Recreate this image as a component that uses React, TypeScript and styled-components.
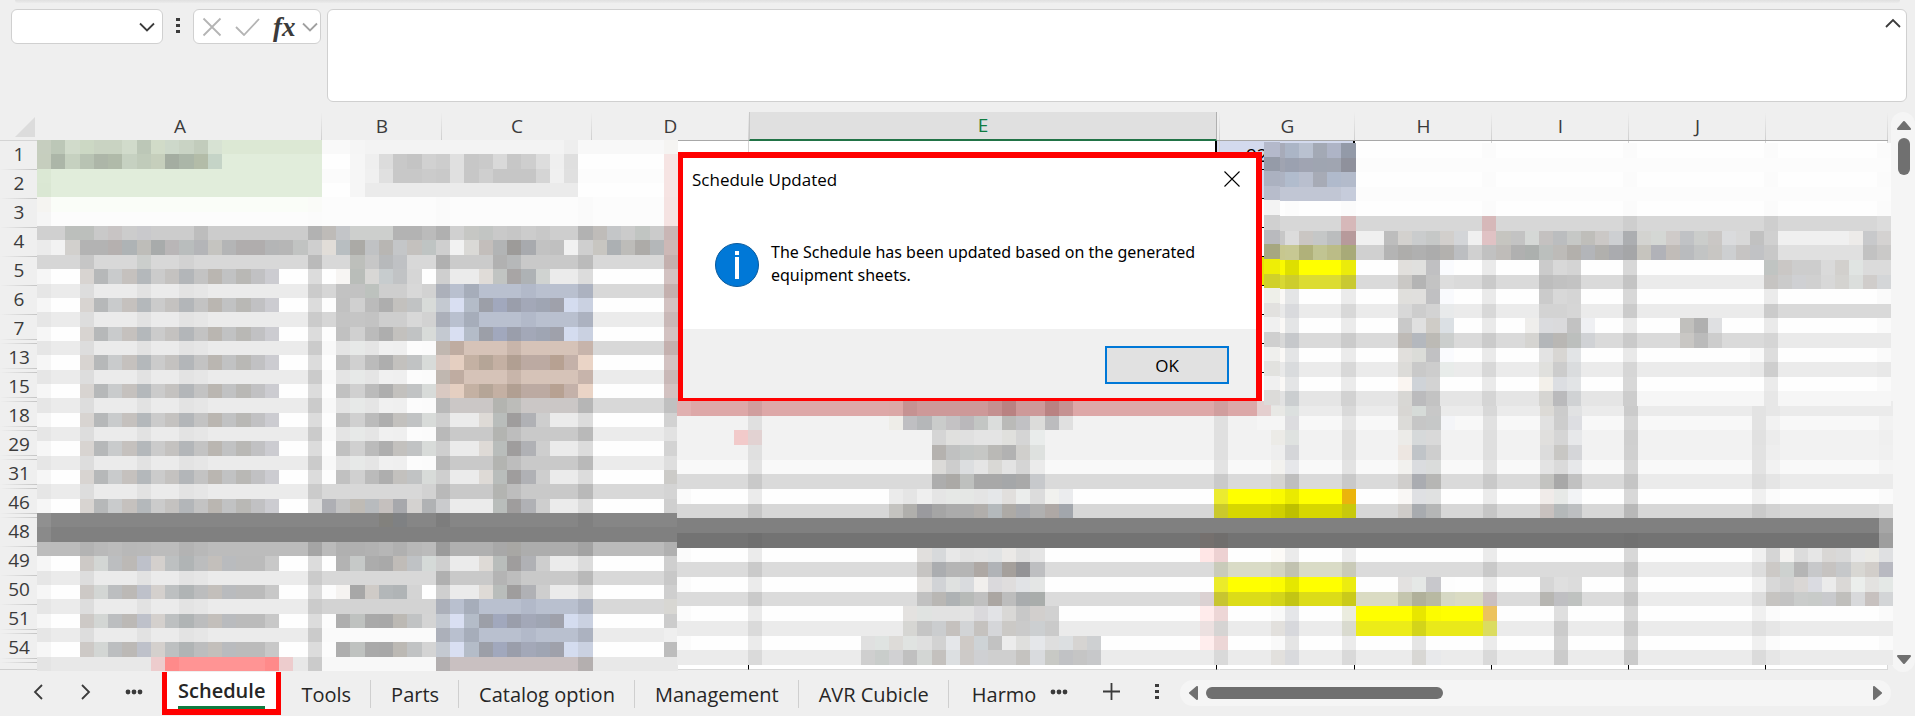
import React from "react";
import styled, { createGlobalStyle, css } from "styled-components";

const GlobalStyle = createGlobalStyle`
  *, *::before, *::after { box-sizing: border-box; }
  body {
    margin: 0;
    background: #efefef;
    color: #3b3b3b;
    font-family: "Open Sans", "Noto Sans", sans-serif;
  }
  button, input, textarea { font: inherit; color: inherit; }
`;

/* ---------- layout ---------- */

const Page = styled.div`
  position: relative;
  display: flex;
  flex-direction: column;
  min-height: 100vh;
  overflow: hidden;
`;

const RibbonEdge = styled.div`
  height: 3px;
  margin: 0 15px;
  border-radius: 0 0 6px 6px;
  background: linear-gradient(#e0e0e0, #ebebeb);
`;

const FormulaBar = styled.header`
  display: flex;
  align-items: flex-start;
  height: 109px;
  padding: 6px 8px 0 11px;
`;

const Box = styled.div`
  display: flex;
  align-items: center;
  height: 35px;
  background: #fff;
  border: 1px solid #d0d0d0;
  border-radius: 6px;
`;

const NameBox = styled(Box)`
  width: 152px;
  padding-right: 7px;
`;

const FunctionBox = styled(Box)`
  width: 128px;
  gap: 13px;
  padding-left: 8px;
`;

const FxGroup = styled.div`
  display: flex;
  align-items: center;
  gap: 6px;
`;

const NameInput = styled.input`
  flex: 1;
  min-width: 0;
  border: 0;
  outline: 0;
  background: transparent;
  font-size: 18px;
`;

const IconButton = styled.button`
  display: flex;
  align-items: center;
  justify-content: center;
  padding: 0;
  border: 0;
  background: transparent;
  color: #3b3b3b;
`;

const DotsGap = styled.div`
  display: flex;
  justify-content: center;
  width: 30px;
  padding-top: 9px;
`;

const FxLabel = styled.span`
  font: italic bold 27px/30px "Liberation Serif", serif;
`;

const FormulaField = styled.div`
  display: flex;
  flex: 1;
  align-items: flex-start;
  height: 93px;
  margin-left: 6px;
  padding: 8px 5px 0 8px;
  background: #fff;
  border: 1px solid #d0d0d0;
  border-radius: 6px;
`;

const FormulaText = styled.textarea`
  flex: 1;
  height: 76px;
  padding: 0;
  border: 0;
  outline: 0;
  resize: none;
  background: transparent;
  font-size: 18px;
`;

/* ---------- sheet ---------- */

const Sheet = styled.main`
  position: relative;
  display: flex;
  height: 560px;
`;

const GridArea = styled.div`
  flex: 1;
  min-width: 0;
  margin-right: 3px;
`;

const Grid = styled.table`
  width: 100%;
  table-layout: fixed;
  border-collapse: separate;
  border-spacing: 0;
`;

const Corner = styled.th`
  height: 29px;
  padding: 4px 3px 3px 14px;
  text-align: right;
  line-height: 0;
  border-bottom: 1px solid #d4d4d4;
`;

const ColumnHead = styled.th<{ $active?: boolean }>`
  height: 29px;
  padding: 0;
  font-size: 19px;
  font-weight: 400;
  line-height: 27px;
  border-bottom: 1px solid #a8a8a8;
  background: linear-gradient(transparent, #cfcfcf) right / 1px 100% no-repeat;
  ${(p) =>
    p.$active &&
    css`
      color: #107c41;
      background: #e0e0e0;
      border-right: 1px solid #b0b0b0;
      border-left: 1px solid #c8c8c8;
      border-bottom: 2px solid #217346;
    `}
`;

const RowHead = styled.th<{ $gap?: boolean }>`
  height: 29px;
  padding: 0 0 3px;
  font-size: 19px;
  font-weight: 400;
  line-height: 26px;
  text-align: center;
  background:
    linear-gradient(to right, transparent, #c4c4c4) left bottom / 100% 1px no-repeat
    ${(p) =>
      p.$gap &&
      css`, linear-gradient(to right, transparent, #c4c4c4) left bottom 4px / 100% 1px no-repeat`};
`;

const Cell = styled.td<{ $ink?: boolean; $rule?: boolean; $fill?: string }>`
  padding: 0 0 0 26px;
  overflow: hidden;
  white-space: nowrap;
  background: ${(p) => p.$fill || "#fff"};
  border-right: ${(p) => (p.$ink ? "2px solid #000" : "1px solid #d4d4d4")};
  border-bottom: ${(p) => (p.$rule ? "1px solid #000" : "0")};
  color: #000;
  font-size: 19px;
  line-height: 28px;
`;

const TailCell = styled.td<{ $plain?: boolean }>`
  height: 7px;
  padding: 0;
  background: #fff;
  border-right: 1px solid ${(p) => (p.$plain ? "#fff" : "#000")};
  border-bottom: 1px solid #d8d8d8;
  &:last-child { border-right-color: #d8d8d8; }
`;

const TailHead = styled.th`
  height: 7px;
  padding: 0;
  border-bottom: 1px solid #cfcfcf;
`;

const MosaicLayer = styled.svg`
  position: absolute;
  top: 0;
  left: 0;
  width: 100%;
  height: 100%;
  pointer-events: none;
`;

const VScroll = styled.div`
  display: flex;
  flex-direction: column;
  align-items: center;
  width: 24px;
  padding: 8px 0 7px 2px;
  background: #f5f5f5;
  border-radius: 12px;
`;

const VThumb = styled.div`
  width: 12px;
  height: 37px;
  margin: 8px 0 auto;
  border-radius: 6px;
  background: #707070;
`;

/* ---------- footer ---------- */

const Footer = styled.footer`
  display: flex;
  height: 45px;
  padding-right: 24px;
`;

const NavGroup = styled.div`
  display: flex;
  align-items: center;
  justify-content: space-between;
  width: 162px;
  padding: 0 19px 5px 29px;
`;

const NavButton = styled(IconButton)`
  width: 18px;
`;

const TabList = styled.nav`
  display: flex;
`;

const SheetTab = styled.button`
  height: 45px;
  padding: 0 20px;
  border: 0;
  background: linear-gradient(#cfcfcf, #cfcfcf) right 8px / 1px 28px no-repeat;
  color: #262626;
  font-size: 20px;
  line-height: 45px;
  white-space: nowrap;
  &:last-child { background: none; padding-right: 14px; padding-left: 23px; }
`;

const ActiveTab = styled.button`
  height: 43px;
  padding: 0 11px;
  border: solid #f00;
  border-width: 0 5px 6px;
  background: #fff;
  color: #262626;
  font-size: 20px;
  font-weight: 600;
`;

const ActiveLabel = styled.span`
  display: block;
  height: 36px;
  border-bottom: 3px solid #107c41;
  line-height: 35px;
`;

const TabTools = styled.div`
  display: flex;
  align-items: center;
  justify-content: space-between;
  width: 109px;
  padding-bottom: 6px;
`;

const HScroll = styled.div`
  display: flex;
  flex: 1;
  align-items: center;
  height: 26px;
  margin: 8px 0 0 21px;
  padding: 0 8px;
  background: #f5f5f5;
  border-radius: 13px;
`;

const HThumb = styled.div`
  width: 34%;
  height: 12px;
  margin: 0 auto 0 8px;
  border-radius: 6px;
  background: #707070;
`;

/* ---------- message box ---------- */

const Dialog = styled.section`
  position: absolute;
  top: 152px;
  left: 678px;
  display: flex;
  flex-direction: column;
  width: 584px;
  height: 249px;
  border: solid #f00;
  border-width: 6px 6px 3px 5px;
  background: #fff;
  color: #000;
  font-size: 17px;
`;

const DialogTitle = styled.div`
  display: flex;
  align-items: center;
  justify-content: space-between;
  height: 42px;
  padding: 0 16px 0 9px;
`;

const DialogHeading = styled.h1`
  margin: 0;
  font-size: 17px;
  font-weight: 400;
`;

const DialogBody = styled.div`
  display: flex;
  flex: 1;
  align-items: flex-start;
  gap: 12px;
  padding: 43px 40px 0 32px;
`;

const DialogText = styled.p`
  margin: 0;
  margin-top: -2px;
  font-family: "Noto Sans", sans-serif;
  font-size: 16px;
  line-height: 23px;
`;

const DialogActions = styled.div`
  display: flex;
  align-items: center;
  justify-content: flex-end;
  height: 69px;
  padding: 3px 27px 0 0;
  background: #f0f0f0;
`;

const OkButton = styled.button`
  width: 124px;
  height: 38px;
  padding: 0;
  border: 2px solid #0078d7;
  background: #e1e1e1;
  font-size: 17px;
`;

/* ---------- icons ---------- */

const Chevron = ({ d, w = 16, h = 10, color = "#3b3b3b" }: { d: string; w?: number; h?: number; color?: string }) => (
  <svg width={w} height={h} viewBox={`0 0 ${w} ${h}`} fill="none" stroke={color} strokeWidth="1.8">
    <path d={d} />
  </svg>
);

const VDots = () => (
  <svg width="4" height="16" fill="#3b3b3b" shapeRendering="crispEdges">
    <rect y="0" width="4" height="3" />
    <rect y="6" width="4" height="3" />
    <rect y="12" width="4" height="3" />
  </svg>
);

const HDots = () => (
  <svg width="18" height="6" fill="#3b3b3b">
    <circle cx="3" cy="3" r="2.4" />
    <circle cx="9" cy="3" r="2.4" />
    <circle cx="15" cy="3" r="2.4" />
  </svg>
);

const Arrow = ({ d, w, h }: { d: string; w: number; h: number }) => (
  <svg width={w} height={h} viewBox={`0 0 ${w} ${h}`} fill="#707070" stroke="#707070" strokeWidth="2" strokeLinejoin="round">
    <path d={d} />
  </svg>
);

const InfoIcon = () => (
  <svg width="44" height="44" viewBox="0 0 44 44">
    <circle cx="22" cy="22" r="21.5" fill="#0078d7" stroke="#0a5a9c" />
    <rect x="20" y="8" width="4" height="4" fill="#fff" />
    <rect x="20" y="14" width="4" height="22" fill="#fff" />
  </svg>
);

/* ---------- redacted areas ----------
   Each line is one row of blocks: the first token fills the whole row, the rest
   are colours from the left. "@n" jumps to block n, "xx*n" repeats a colour and
   a two-digit token is a grey. */

type Area = { x: number; y: number; w: number; h: number; cols: number; rows: string[] };

const aText = "f6 fe*2 d8d4d1 b6b8b9 c9cbcc c5c1be b4b8bb cb c4c2c0 b3b6b9 c3c3c3 bab6b1 c1c2c3 b9b8b5 c1c1c3 ccccd1 fe*2 dc";
const aLate = "f6 fe*2 cdc9c6 d3d6d4 bcbec0 bcb9b6 bec1ca d4d0cd bdc0c1 b0b4b5 bcbdbe c3bfbb b9bbbe bb*2 c8 fe*2 dc";
const aGap = "e6 eb*2 dd eb*3 e2 eb*2 e3 e6 eb*7 cb";
const bText = "fd c1 d0 bb ae c3c1be c1c3c4 d8dbd9";
const bBlock = "fc ae bfc2c0 a9 a8 bcb9b4 c1c3c4 d4";
const bPale = "f8 e4 e7e9e8 e5 f0 ef fc fb";
const bMid = "d6 c4 c5 c3 ce*2 d8 d2";
const cText = "cf eb*2 dedad6 b9bdbb 9f9d9d b0b1b5 ce eb*2 dc";
const cGap = "b9 c9*3 b3b4b1 bd c9*4 b9";
const blueGap = "acb0ba b9c0cf a6adba b9c0cf*3 b2b9c9 b9c0cf*3 acb2c0";
const blueText = "c4c9d1 d9dff2 b4bcc8 9c9fa8 a1a8bd 9a9eab a3a8b8 9fa5b3 9fa1ab d4dcef cad1e1";
const tanGap = "c0b7b0 bfaca1 d6c3b8*3 c8b5aa d6c3b8*4 c7b4ab";
const tanText = "d9c9c2 e5cfc1 c4b1a3 b5a597 c4b0a3 b19f92 bcaaa2*2 b7a192 c4b1a9 ead4c6";
const line = (a: string, b: string, c: string, d: string, edge: string) =>
  `${d} ${a} ${b} ${c} @44 ${edge}`;

const leftArea: Area = {
  x: 37, y: 28, w: 641, h: 531, cols: 45,
  rows: [
    "f8 c6cebf bcc7b7 d1dbcb ccd8c4 c9d3c2*2 d1dbcb bcc7b7 d1dbc8 cdd8ca c9d3c4 c2ccbc d7e2d3 dce8d4*7 f9*2 f5 f3*14 ee @44 f5f4f2",
    "fe c6cebe acb6a8 c6d1c0 b8c3b3 adb6a8 b0baa9 c6d1c1 c0cbba c6cfbc a4ada1 abb6a8 b3bca8 c5d4c7 e1eddb*7 fe*2 f6 ef dc c8 c4 d1 cd e0 c7 ca d9 c7 ce dd ef df @44 f6e4e3",
    "fc dbe8d4 e1eddb*19 fb*2 f6 f0 e0 c8*2 cb c9 e0 c7 cf c6*3 d5 f0 e0 @44 f6e4e3",
    "fe dae7d3 e1eddb*19 fe*2 f6 eb*15 @44 f6e4e3",
    "fc f5f4f1 fafdf8*18 fafbf8 @28 fa @38 fa @44 f5e3e2",
    "fc f5 @19 fb @28 fa @38 fa @44 f5e3e2",
    "cc d0*2 bcbfbc*2 c9 c8c4c4 cc c9c9cc cc*3 bd cc*7 b2 bebbb8 c3c5c8 cdcfcd*3 b3*2 bb b0 d0 c6c7c4 c2c5c3 c9 c6 cc c8 ce*2 b2 bfbcb9 c4c6c8 cb c1c5c2 cb c9b6b5",
    "fe eb f2 d2d0cd b3*2 b5b0af aeb3b5 bebdb9 a8abab b9b6b7 b9bdbd b4b5b8 c5c4c0 b4b5b6 b0adad*2 b4b5b6 b6 c1c3c2 f1 @19 cf e1ddd8 b8bec1 abaaa6 c0c2c4 b8b6b3 c4c6c8 c4c1be bfc4c3 cf f2 dad9d6 c3bebb b2b4b5 9d9b99 a8aaae c2 c0 f1 cf c8c6c1 acb0b3 bdbcb9 adaba8 b4b7b9 cdb8b6",
    line("d6*3 c6 d8*3 cbcecc d8*2 d2 d8*8 ba", "d8*2 bdbfbb c7 b7b9bb bfc1c4 d8*2", "b0 cb*3 b1 b6b8b9 c9*4 bb", "d8", "c4b0ae"),
    line(aText, "fe f7f5f3 b9bdb9 d8d7d5 c7ccce c1c3c5 d6 fe", "cf eb*2 e0dcd8 c1c4c2 a8a5a5 aeb2b5 d0d3d1 eb*2 dc", "fe", "d3c2c1"),
    line(aGap, "d6 c2*2 bdc2be ce*2 d8 d2", blueGap, "d8", "c4b0ae"),
    line(aText, bText, blueText, "fe", "d3c2c1"),
    line(aGap, bMid, blueGap, "eb", "c9b8b7"),
    line(aText, bText, blueText, "fe", "d3c2c1"),
    line(aGap, bPale, tanGap, "d8", "c4b0ae"),
    line(aText, bText, tanText, "fe", "d3c2c1"),
    line(aGap, bPale, tanGap, "eb", "c9b8b7"),
    line(aText, bText, tanText, "fe", "d3c2c1"),
    line(aGap, bPale, "b9 cbc7c6*3 b3b4b0 bcbcb9 cbc7c6*4 b6", "d8", "c0"),
    line(aText, bText, cText, "fe", "d2"),
    line(aGap, bPale, cGap, "eb", "e2"),
    line(aText, bText, cText, "fe", "d3"),
    line(aGap, bPale, cGap, "eb", "de"),
    line(aText, bText, cText, "fe", "cccbc8"),
    line(aGap, "d8*7 d2", cGap, "d8", "d4"),
    line(aText, "aeafb4 c3 bfbbb5 b8bbbe c5c0be a7a8ac d4d2d0 b0b2b4", "cacbcd eb*3 b9bdbb 9f9d9d b0b1b5 ce eb*2 dc", "fe", "cf"),
    "86 90 @24 82817d 7f8183 @28 7d @38 80",
    "80 8a",
    line("bc*3 b3 b9 bc b8 b9 bc*2 b3 b8 bc*7 a5", "bb b0*2 b2 b6 b0 b8 bb", "9b b0*3 a8 a8a7a4 ad*4 a3", "bb", "b0"),
    line(aLate, "fe b3 c6c9c8 ac a9 c0bcb8 bfc2c5 d5dad8", cText, "fe", "cf"),
    line(aGap, "d8*8", "b0 c9*3 b4 bd c9*4 b9", "d8", "c8"),
    line(aLate, "fc f5f3f1 a7 cfcbc7 b3b7b9 b0b4b6 d4 fe", cText, "fe", "cf"),
    line(aGap, "d3*8", blueGap, "d8", "d8d7d3"),
    line(aLate, bBlock, blueText, "fe", "cc"),
    line(aGap, "fa*8", blueGap, "eb", "ef"),
    line(aLate, bBlock, blueText, "fe", "bd"),
    "e8 e4 @8 edcccd ff8a8a ff9494*6 ff8a8a edcccd @19 cb f8*8 b3afb0 c9c0c1*9 b4afaf",
  ],
};

const upperRight: Area = {
  x: 1271, y: 31, w: 620, h: 263, cols: 44,
  rows: [
    "fe a7abb9 abb5c6 b9c1d0 a3a9b5 aeb4c6 939aa8 @15 fb @25 fb @35 fb @43 fb",
    "fc a0a4b1 9ba1b0 a0a4b2 9fa5b1 a0a5b1 8f919c",
    "fe adb3c2 b1bccd b9bfce a7abb6 b0bacc b3bbcb @15 fb @25 fb @35 fb @43 fb",
    "fc c1c6d4*5 c6ccdb",
    "fe @1 fc @5 fb @15 fb @25 fb @35 fb @43 fb",
    "d7 @5 d6b8b9 @15 d6b8b9 @25 ce @35 ce @43 dc",
    "d0 c7 dc cac6c3 c5c7c7 bbbdbe b79a9b f0*2 bd d3d1ce cacccd c6c8c7 d2cfcc d3d5d8 f0 e0c2c4 c6c5c0 c3 d5d8d6 c4c1c0 bbbdbf c6c8c6 bfbeba cbc8c6 cdcfd2 acaeb1 d3d3d0 d4d7d4 cfcbc9 c0c2c5 cbcdcb cac7c5 dadbdd d8 c1 d0 f0*5 edebe9 c8c9cb d4d2d1",
    "d0 c7c78f c7c893 b0b17a c1c492 bbbc87 a8aa78 d0*2 b4 aeadab b0 ac b3b1ae bcbec1 d0 c1 bfbcb9 b0 acb0ae bbbfbd bdbbb8 b3b0ac b3b5b9 b1b0ad aaabaf a5a6a8 c6c4be b1b2b8 c1bcb8 b9bbbe c2c4c4 c8c6c3 cdcfd1 c6c4c3 c1c2c5 c8 e0*6 c2 cac9c8",
    "fe fafa00 dedf00 ffff00*3 ebeb0b @9 e1dfdc e0e0de c0c0c2 fafbfe @15 ea @19 cb d8 d4 @25 d8 @35 c0c4c2 cac7c5 cd*2 da d2d0cd e0e4e2 db*2",
    "da d8d833 cdcd2c dcdc32*3 c9c931 @9 cac8c5 b4 c3 dd @15 ca @19 bd c1 c3 @25 c4 eb*9 c6c4c2 cb cfd0d3 d0 d8 d4d3d0 dbdedc d0cdcb d4d6d8",
    "fe faf8f6 e4e5e6 @5 eb @9 e0dfdc e0dfdd c0c0c2 f9fafd @15 ea @19 cb d8 d5 @25 d8 @35 eb @43 fa",
    "eb e9 d9dadd @5 d8 @9 d8 cd d3 e8eaeb @15 d8 @19 d3*2 d6 @25 cb @35 cb d9*8",
    "fe faf8f6 e4e5e6 @5 eb @9 c9 e0 cfccc7 dbe0e4 @15 ea @18 efeeec dadbde dadadc c2 eff0f3 @25 ea @29 c1c0bd b0 dfe0e2 @35 ea @43 fa",
    "da d8 c6c8cb @5 cb @9 bebab6 b4b8be bcbab5 cbcecd @15 cb @18 d5d4d1 b3b6b9 b9b7b4 bcbfbd d0d2d5 @25 ca @29 c9c7c4 bb cd @35 d5 ea*8",
    "fe faf8f6 e4e5e6 @5 eb @9 e1dfdc dbdcd8 c1c1c3 fafbfe @15 ea @19 e3 d8d6d3 e2e4e6 @25 e9 @34 f9 dd @43 fa",
    "eb e9 d9dbdd @5 d8 @9 dcdbd8 c9 cd e8ecea @15 d8 @19 e0e0dd cc dadcde @25 d6 @34 e8 ce @43 e8",
    "fe faf8f6 e4e5e6 @5 eb @9 faf5f1 cfd3d8 d3 @15 ea @19 f3f0ea dcdee2 e2e4e6 @25 d8 @35 eb @43 fa",
    "e5 e2 cbced0 @5 d2 @9 d8d7d4 bbbbbd c3 @15 d5 @19 d6d5d2 bababc d0d2d4 @25 cd f6*9 e7 f6*8",
  ],
};

const dialogEdge: Area = {
  x: 1264, y: 30, w: 16, h: 263, cols: 1,
  rows: "b4b9cb 959ba8 abb1c0 b7bccb f3 d0 b9babe a6a780 eeee06 d0d02a eeefe9 e2e1df f0 cf efefed e2e2df f0 dcdbd9".split(" "),
};

const lowerRight: Area = {
  x: 677, y: 289, w: 1216, h: 264, cols: 86,
  rows: [
    "eb e0b0b0 dda8a8*4 d09e9e dda8a8*9 dba8a6 c59292 cd9999*5 c49090 b98282 cd9999*2 b98282 c59292 dda8a8*10 d09e9e dba8a8*2 e4cfcf e8e8e5 dce0df @47 d9 @51 d8d6d3 d6dbd8 c8 @57 d8 @61 dcdad6 cc e1e2e3 @67 cb @76 e3 e7",
    "f8 f2*5 e0 f2*9 eeede8 bfbfc2 b5b7b9 cacccb c4c2c4 bab8bb c3c6c4 dbdddc babab8 c1c1c4 dcdcda bcbcbe e0 f2*10 e0 f2*2 f5*2 dcdcdf @47 e5 @51 dcdbd8 c6 c6c8c8 f4f5f8 @57 e1 @61 e1 cd dddee2 @67 d5 @76 e3 f2 @85 f2",
    "f2 @4 f2caca e2d2d2 @18 d5 e0e0de e0 e4*2 e0e0dd d5 e9eceb @38 e0 @42 ecebe7 dfe2e0 @47 df @51 ecebe8 d6d9da d9 @57 df @61 e0dfdd d5 e7e8ea @67 cf @76 e1 ec @85 ef",
    "f2 @5 e0 @18 b5b2af c0c1c1 c3c6c5 c6c7c5 bab9b6 b2 d0cfcc dee1df @38 e0 @42 ee d5d6d9 @47 df @51 ede6e1 c0c4c8 ce @57 df @61 dc c8c7c4 d5d6d9 @67 d0 @76 e2 ee @85 f0",
    "f9 @5 e3 @18 dbdad8 cd dcdee0 e5 d9d8d5 e3 d5 eb @38 e3 @42 f3f2ef e6e7ea @47 e3 @51 f2f1ee dadcdf dadcdb @57 e3 @61 e3 da e7e8ea @67 d6 @76 e3 f2 @85 f4",
    "da @5 c9 @18 ad aba9a6 bec0be a8*2 a5a7a9 a9 c7c9cc @38 ca @42 d5d4d1 be @47 c9 @51 d0cecc aaacb1 b6b6b4 @57 c9 @61 c3c3c0 a8 c1 @67 c5 eb*8 dd e5 eb*8",
    "fe fa @5 eb @15 eb e5 ef e5 e6e8e6 e5e7e5 e4 e5e7e9 e1dfdd ebedec dc f1f1ee ebecee @38 ebeb30 ffff00*3 fafa00 eaea00 ffff00*3 ebb40c @51 f9f7f5 dfe0e3 e0e1e1 @57 eb @61 f0ebe9 e7e9e7 f2f3f5 @67 d8 @76 f0 fb @85 fa",
    "d7 @5 c6 @15 c4c3c0 b0afac 9a9a9e a5 ab*2 b1aeab b4b9bc adaaa6 a6a8ac b0 aea8a5 a2a6ac @38 cac92c d7d700*3 d0d000 bec000 d7d700*3 c8c90c @51 cfccc9 a8abaf b5b6b6 @57 c6 @61 c8c1bf b4b8b9 bdbfc1 @67 b8 @76 ca d2 @85 de",
    "80 @85 a6",
    "73 @5 6f @37 75706e 706e6d @67 71 @85 9e",
    "fe fb @5 eb @17 e1dfdd d7d9db e8 e2 e4 e1e3e4 ebe9e7 df e5 @37 ffe6e6 edd1d2 @42 fcfaf7 eb @47 eb @57 eb @67 d8 @76 f0 d5 f3f2f0 dc e6 d9d7d5 d9 e9 ebeae6 dfe0e2",
    "db @5 ca @17 c6c4c2 abadb0 b5*2 aea8a4 b0b3b7 a5a09c 939396 bebfc1 @38 c9cbba d9dbc6*3 d3d4c0 c1c2b0 d9dbc6*3 c9cab8 @57 c9 @67 c5 ea*8 dd ccc9c6 cdd1cf b5 c7c8ca c6c3c1 c6c8ca d8d7d3 d2ceca b8b9c1",
    "fe fb @5 eb @17 e4e2e0 d1d3d6 dfe1e0 d9dbde f1efed dad9dc dfdddd e1e3e6 e4e6e5 @38 ebeb2a ffff00*3 fcfc00 e5e700 ffff00*3 ecec10 @51 e3e1e0 e5e8e6 c8c8cc fd @57 eb @61 d6 df dc @67 d8 @76 f0 d8 d2 dad7d5 dadbe1 eb dad8d6 ebeeec e3e2e0 e4e8e6",
    "db @5 ca @17 c1 b9b7b4 aeb2b4 b7bab8 c0 aba6a2 bd a9acae a9adab @37 dbd1d2 c8c530 dcdc18*3 d4d51a c3c514 dcdc18*3 caca1a dadbc3*3 c4c5ae b0b09a b8b9a2 d6d8c4 dadbc3*2 cabfc0 @61 b7b6b2 bfbfc2 bfc2c0 @67 c5 eb*8 dd c6c4c1 c3 cacccb c8cbc9 c9cacd c0bfbc d8d9db c7c1bf d3d5d7",
    "fe fb @5 eb @16 e4e2e0 e0e3e1 e2*2 e3 dad9dc e2e3e6 d9d8d6 c8 d2cfcd d1 @37 ffebeb edd6d6 @42 f9 e5e6e9 @47 ebecdf ffff00*4 e8e600 fcfc00 ffff00*3 ecc35e @62 df @67 d8 @76 f0 fb @85 fa",
    "eb @5 da @16 d6d6d3 c5 cbcdcf c5c1be d2d4d6 c5c2bf d5d6d9 cbc9c6 ca cccfd1 ca @37 ece0e0 d6d4d3 @42 e2e0dd d7d8dc @47 d9dacf ecec18*4 d3d41a e9e91a*4 dbdc60 @62 cb @67 ca @76 df e6",
    "fe fb @5 eb @13 e0 dfe3e1 dddbd8 e0e3e1 df d2 e5e7ea cfcac6 ced3d6 c2 ec dfdfdd e5e7ea de dcdfe1 d6d4d2 ced0d2 @37 ffeded ecd6d6 @42 f9 e5 @47 eb @52 e5 @57 eb @62 d2 @67 d8 @76 f0 fb @85 fa",
    "eb @5 da @13 cf c9cdcb d1d1d3 c0 d3d6d4 c4c1be dcdfe1 cdcac8 cfd0d3 cf*2 c5c3c0 d9dbde c8c9c5 c1c2c5 c5 c7c8ca @38 d9 @42 e2e0dd d9dadd @47 d9 @52 d8d7d4 e8e9eb @57 d9 @62 cb @67 ca @76 db e6",
  ],
};

const toColor = (t: string) => (t.length === 2 ? `#${t}${t}${t}` : `#${t}`);

const Mosaic = ({ area }: { area: Area }) => {
  const { x, y, w, h, cols, rows } = area;
  const left = (c: number) => x + Math.round((w * c) / cols);
  const top = (r: number) => y + Math.round((h * r) / rows.length);
  return (
    <g>
      {rows.map((row, r) => {
        const [base, ...tokens] = row.split(/\s+/);
        const height = top(r + 1) - top(r);
        let at = 0;
        return (
          <g key={r}>
            <rect x={x} y={top(r)} width={w} height={height} fill={toColor(base)} />
            {tokens.map((token, i) => {
              if (token[0] === "@") {
                at = Number(token.slice(1));
                return null;
              }
              const [code, times = "1"] = token.split("*");
              const from = at;
              at += Number(times);
              return (
                <rect key={i} x={left(from)} y={top(r)} width={left(at) - left(from)} height={height} fill={toColor(code)} />
              );
            })}
          </g>
        );
      })}
    </g>
  );
};

/* ---------- data ---------- */

const columns = [
  { name: "A", width: 284 },
  { name: "B", width: 120 },
  { name: "C", width: 150 },
  { name: "D", width: 157 },
  { name: "E", width: 468 },
  { name: "", width: 3 },
  { name: "G", width: 135 },
  { name: "H", width: 137 },
  { name: "I", width: 137 },
  { name: "J", width: 137 },
  { name: "" },
];

const HIDDEN_COLUMN = 5;

const rowNumbers = [1, 2, 3, 4, 5, 6, 7, 13, 15, 18, 29, 31, 46, 48, 49, 50, 51, 54];
const beforeHidden = new Set([7, 13, 15, 18, 29, 31, 46, 51, 54]);
const tabs = ["Tools", "Parts", "Catalog option", "Management", "AVR Cubicle", "Harmo"];

const cellFill = (row: number, col: number) => {
  if (columns[col].name !== "G" && col !== HIDDEN_COLUMN) return undefined;
  if (row < 3) return "#d3daee";
  return row === 5 ? "#e6e600" : undefined;
};

export default function App() {
  return (
    <>
      <GlobalStyle />
      <Page>
        <RibbonEdge />
        <FormulaBar>
          <NameBox>
            <NameInput aria-label="Name box" />
            <IconButton aria-label="Open name list">
              <Chevron d="M1 1.5l7 7 7-7" />
            </IconButton>
          </NameBox>
          <DotsGap>
            <VDots />
          </DotsGap>
          <FunctionBox>
            <IconButton aria-label="Cancel">
              <Chevron w={20} h={20} color="#b4b4b4" d="M1.500 1.500l17 17M18.500 1.500l-17 17" />
            </IconButton>
            <IconButton aria-label="Enter">
              <Chevron w={25} h={18} color="#b4b4b4" d="M1 9l8 8L24 1" />
            </IconButton>
            <FxGroup>
              <IconButton aria-label="Insert function">
                <FxLabel>fx</FxLabel>
              </IconButton>
              <IconButton aria-label="Function list">
                <Chevron color="#a0a0a0" d="M1 1.500l7 7 7-7" />
              </IconButton>
            </FxGroup>
          </FunctionBox>
          <FormulaField>
            <FormulaText aria-label="Formula" />
            <IconButton aria-label="Collapse formula bar">
              <Chevron d="M1 9l7-7 7 7" />
            </IconButton>
          </FormulaField>
        </FormulaBar>

        <Sheet>
          <GridArea>
            <Grid>
              <colgroup>
                <col style={{ width: 38 }} />
                {columns.map((c, i) => (
                  <col key={i} style={{ width: c.width }} />
                ))}
              </colgroup>
              <thead>
                <tr>
                  <Corner aria-label="Select all">
                    <svg width="20" height="20" fill="#dcdcdc">
                      <path d="M20 0v20H0z" />
                    </svg>
                  </Corner>
                  {columns.map((c, i) => (
                    <ColumnHead key={i} scope="col" $active={c.name === "E"}>
                      {c.name}
                    </ColumnHead>
                  ))}
                </tr>
              </thead>
              <tbody>
                {rowNumbers.map((n) => (
                  <tr key={n}>
                    <RowHead scope="row" $gap={beforeHidden.has(n)}>
                      {n}
                    </RowHead>
                    {columns.map((c, i) => (
                      <Cell
                        key={i}
                        $ink={c.name === "E" || c.name === "G"}
                        $rule={c.name === "G"}
                        $fill={cellFill(n, i)}
                      >
                        {n === 1 && c.name === "G" ? "92" : null}
                      </Cell>
                    ))}
                  </tr>
                ))}
                <tr>
                  <TailHead />
                  {columns.map((_, i) => (
                    <TailCell key={i} $plain={i === HIDDEN_COLUMN || i < 3} />
                  ))}
                </tr>
              </tbody>
            </Grid>
          </GridArea>
          <VScroll>
            <IconButton aria-label="Scroll up">
              <Arrow w={14} h={10} d="M7 2L13 9H1z" />
            </IconButton>
            <VThumb />
            <IconButton aria-label="Scroll down">
              <Arrow w={14} h={10} d="M7 8L13 1H1z" />
            </IconButton>
          </VScroll>
          <MosaicLayer shapeRendering="crispEdges" aria-hidden="true">
            <Mosaic area={leftArea} />
            <Mosaic area={lowerRight} />
            <Mosaic area={upperRight} />
            <Mosaic area={dialogEdge} />
          </MosaicLayer>
        </Sheet>

        <Footer>
          <NavGroup>
            <NavButton aria-label="Previous sheet">
              <Chevron w={10} h={16} d="M9 1L2 8l7 7" />
            </NavButton>
            <NavButton aria-label="Next sheet">
              <Chevron w={10} h={16} d="M1 1l7 7-7 7" />
            </NavButton>
            <NavButton aria-label="More sheets">
              <HDots />
            </NavButton>
          </NavGroup>
          <TabList>
            <ActiveTab>
              <ActiveLabel>Schedule</ActiveLabel>
            </ActiveTab>
            {tabs.map((t) => (
              <SheetTab key={t}>{t}</SheetTab>
            ))}
          </TabList>
          <TabTools>
            <IconButton aria-label="More sheets to the right">
              <HDots />
            </IconButton>
            <IconButton aria-label="New sheet">
              <Chevron w={17} h={17} d="M8.500 0v17M0 8.500h17" />
            </IconButton>
            <IconButton aria-label="Options">
              <VDots />
            </IconButton>
          </TabTools>
          <HScroll>
            <IconButton aria-label="Scroll left">
              <Arrow w={10} h={14} d="M2 7L9 1v12z" />
            </IconButton>
            <HThumb />
            <IconButton aria-label="Scroll right">
              <Arrow w={10} h={14} d="M8 7L1 1v12z" />
            </IconButton>
          </HScroll>
        </Footer>

        <Dialog role="alertdialog" aria-labelledby="dialog-title" aria-describedby="dialog-text">
          <DialogTitle>
            <DialogHeading id="dialog-title">Schedule Updated</DialogHeading>
            <IconButton aria-label="Close">
              <svg width="16" height="16" stroke="#000" strokeWidth="1.1">
                <path d="M.5.5l15 15M15.500.5l-15 15" />
              </svg>
            </IconButton>
          </DialogTitle>
          <DialogBody>
            <InfoIcon />
            <DialogText id="dialog-text">
              The Schedule has been updated based on the generated
              <br />
              equipment sheets.
            </DialogText>
          </DialogBody>
          <DialogActions>
            <OkButton>OK</OkButton>
          </DialogActions>
        </Dialog>
      </Page>
    </>
  );
}
